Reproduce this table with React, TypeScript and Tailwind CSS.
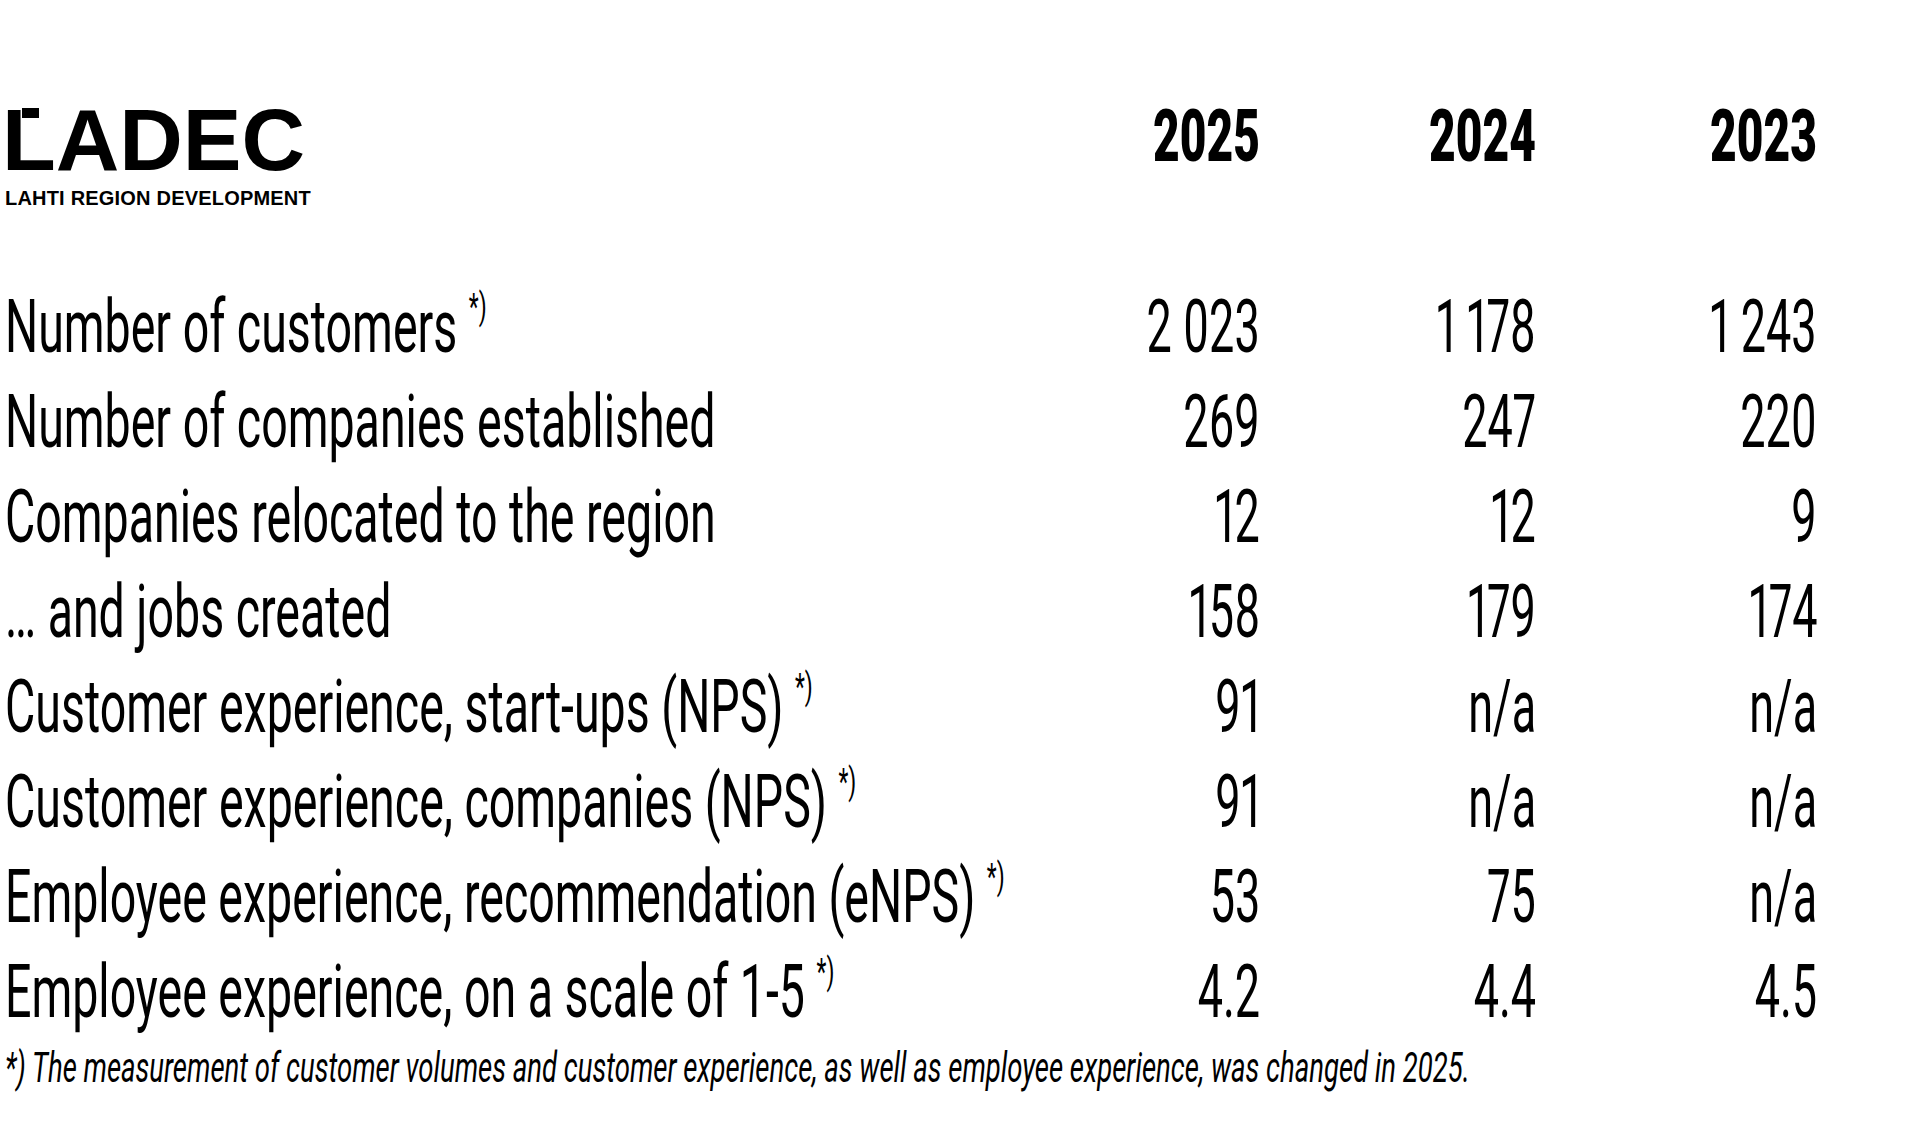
import React from "react";

type Row = { label: string; note?: boolean; values: [string, string, string] };

const ROWS: Row[] = [
  { label: "Number of customers", note: true, values: ["2\u00a0023", "1\u00a0178", "1\u00a0243"] },
  { label: "Number of companies established", values: ["269", "247", "220"] },
  { label: "Companies relocated to the region", values: ["12", "12", "9"] },
  { label: "\u2026 and jobs created", values: ["158", "179", "174"] },
  { label: "Customer experience, start-ups (NPS)", note: true, values: ["91", "n/a", "n/a"] },
  { label: "Customer experience, companies (NPS)", note: true, values: ["91", "n/a", "n/a"] },
  { label: "Employee experience, recommendation (eNPS)", note: true, values: ["53", "75", "n/a"] },
  { label: "Employee experience, on a scale of 1-5", note: true, values: ["4.2", "4.4", "4.5"] },
];

const YEARS = ["2025", "2024", "2023"];

// same column grid for header and rows, numbers right-aligned
const cols = "grid grid-cols-[minmax(0,1fr)_262px_276px_281px]";

function Logo() {
  return (
    <div className="font-['Liberation_Sans',Arial,sans-serif] font-bold">
      <div className="relative -ml-[3px] text-[88px] leading-[88px]">
        LADEC
        {/* top arm of the L */}
        <span className="absolute left-[20px] top-[12px] h-[10px] w-[17px] bg-black" />
      </div>
      <div className="mt-[4px] text-[20px] leading-[20px] tracking-[0.2px]">LAHTI REGION DEVELOPMENT</div>
    </div>
  );
}

export default function App() {
  return (
    <div className="min-h-[1137px] w-[1920px] overflow-hidden bg-white pl-[5px] pr-[103px] pt-[96px] text-black font-[Roboto,sans-serif]">
      {/* header: logo + years */}
      <header className={cols}>
        <Logo />
        {YEARS.map((y) => (
          <div key={y} className="mt-[5px] text-right">
            <span className="inline-block origin-right scale-x-[0.64] text-[72px] font-black leading-[72px]">{y}</span>
          </div>
        ))}
      </header>

      {/* key figures */}
      <div className="mt-[71px]">
        {ROWS.map((r) => (
          <div key={r.label} className={`${cols} text-[75px] font-normal leading-[95px]`}>
            <div className="whitespace-nowrap">
              <span className="inline-block origin-left scale-x-[0.62]">
                {r.label}
                {r.note && (
                  <>
                    {" "}
                    <span className="relative -top-[33px] text-[37px] leading-none">*)</span>
                  </>
                )}
              </span>
            </div>
            {r.values.map((v, i) => (
              <div key={i} className="whitespace-nowrap text-right">
                <span className="inline-block origin-right scale-x-[0.6] proportional-nums">{v}</span>
              </div>
            ))}
          </div>
        ))}
      </div>

      <p className="mt-[8px] whitespace-nowrap text-[42px] italic leading-[42px]">
        <span className="inline-block origin-left scale-x-[0.655]">
          *) The measurement of customer volumes and customer experience, as well as employee experience, was changed in 2025.
        </span>
      </p>
    </div>
  );
}
